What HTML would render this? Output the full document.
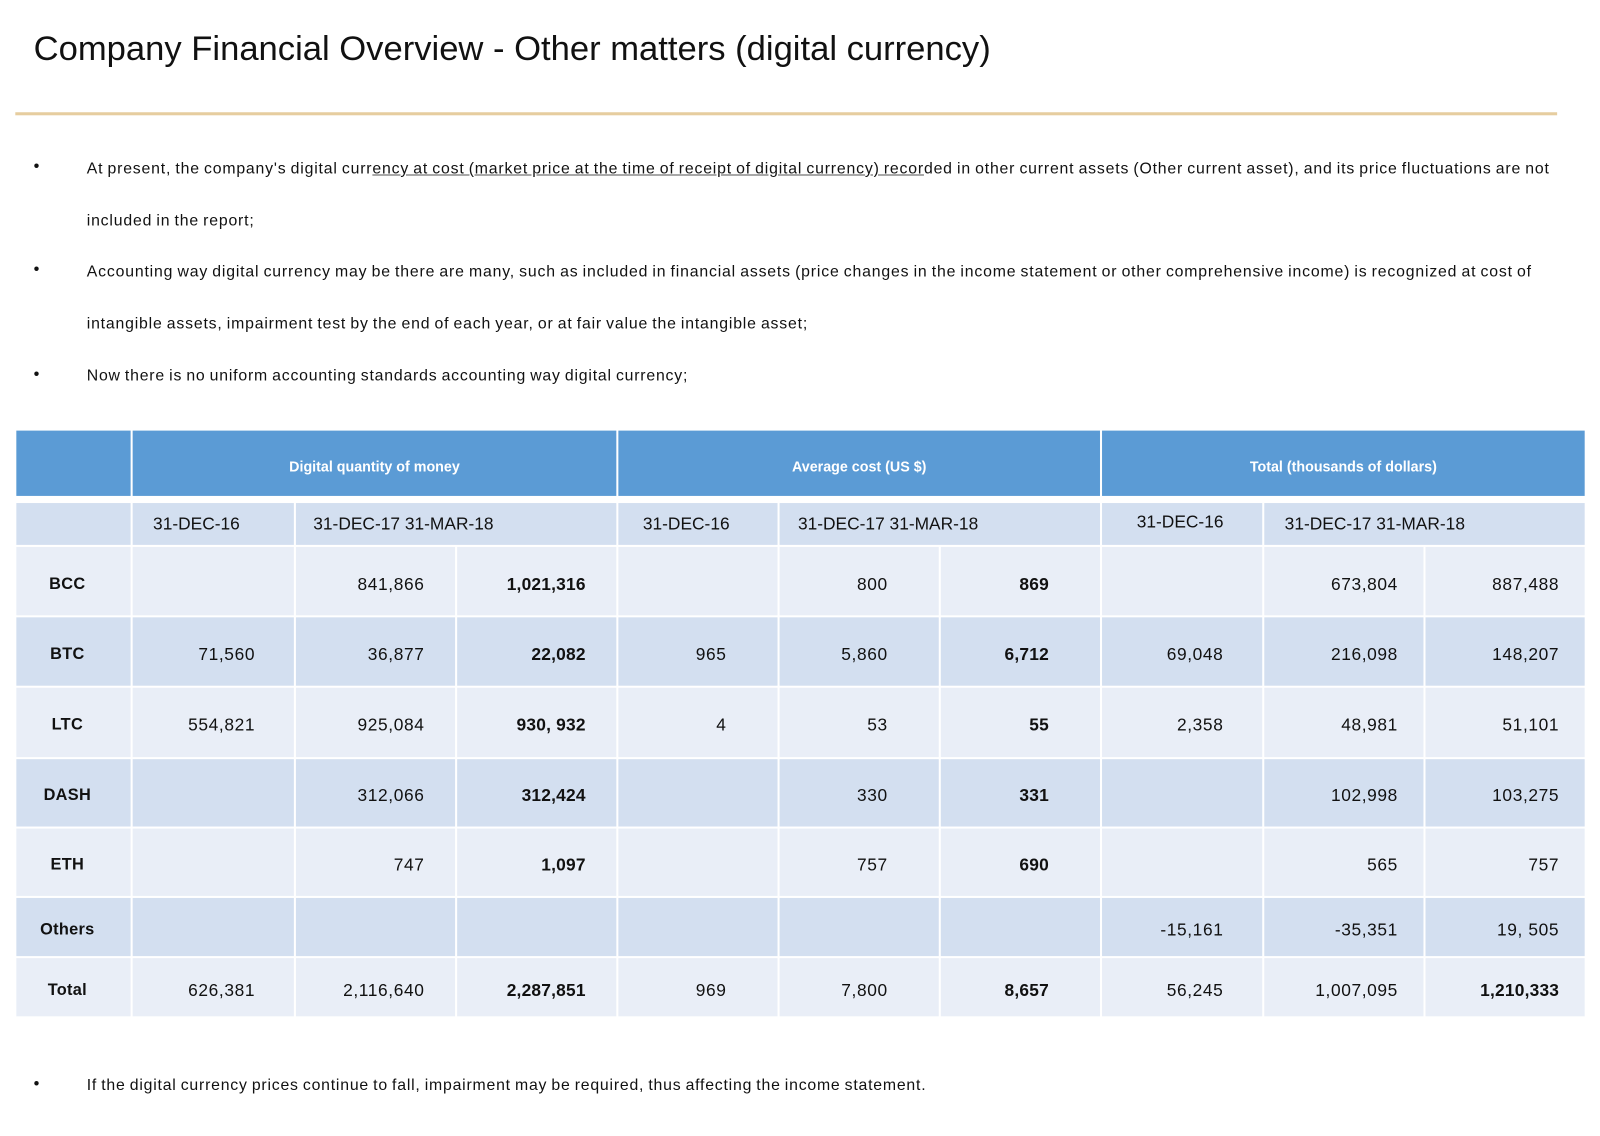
<!DOCTYPE html>
<html><head><meta charset="utf-8"><style>
body{margin:0;width:1600px;height:1136px;background:#fff;font-family:"Liberation Sans",Arial,sans-serif;position:relative;overflow:hidden;color:#111}
#w{position:absolute;left:0;top:0;width:1568px;height:1113px;transform:scale(1.0204);transform-origin:0 0}
.t{position:absolute;left:33px;top:29px;font-size:33.9px;white-space:nowrap}
.hr{position:absolute;left:15px;top:110px;width:1511px;height:3px;background:#e6cd9f}
.p{position:absolute;left:85px;font-size:15.5px;white-space:nowrap;letter-spacing:0.8px;word-spacing:-1px}
.b{position:absolute;left:33px;font-size:16px}
.c{position:absolute;box-sizing:border-box;display:flex;align-items:center;font-size:17px;white-space:nowrap;letter-spacing:0.6px}
.h{background:#5b9bd5;color:#fff;font-size:14px;font-weight:bold;justify-content:center;letter-spacing:0;padding-top:6px}
.u{text-decoration:underline;text-decoration-color:#555}
</style></head><body><div id="w">
<div class="t">Company Financial Overview - Other matters (digital currency)</div>
<div class="hr"></div>
<div class="b" style="top:155px">•</div>
<div class="p" style="top:157px">At present, the company's digital curr<span class="u">ency at cost (market price at the time of receipt of digital currency) recor</span>ded in other current assets (Other current asset), and its price fluctuations are not</div>
<div class="p" style="top:208px">included in the report;</div>
<div class="b" style="top:256px">•</div>
<div class="p" style="top:258px;letter-spacing:0.81px">Accounting way digital currency may be there are many, such as included in financial assets (price changes in the income statement or other comprehensive income) is recognized at cost of</div>
<div class="p" style="top:309px;letter-spacing:0.8px">intangible assets, impairment test by the end of each year, or at fair value the intangible asset;</div>
<div class="b" style="top:359px">•</div>
<div class="p" style="top:360px;letter-spacing:0.78px">Now there is no uniform accounting standards accounting way digital currency;</div>
<div class="b" style="top:1054px">•</div>
<div class="p" style="top:1055px;letter-spacing:0.77px">If the digital currency prices continue to fall, impairment may be required, thus affecting the income statement.</div>
<div id="tbl"></div>
</div>
<script>
var xs=[[16,128],[130,288],[290,446],[448,604],[606,762],[764,920],[922,1078],[1080,1237],[1239,1395],[1397,1553]];
var out='';
function cell(x,y,w,h,bg,txt,style){out+='<div class="c" style="left:'+x+'px;top:'+y+'px;width:'+w+'px;height:'+h+'px;background:'+bg+';'+(style||'')+'">'+txt+'</div>';}
out+='<div class="c h" style="left:16px;top:422px;width:112px;height:64px"></div>';
out+='<div class="c h" style="left:130px;top:422px;width:474px;height:64px">Digital quantity of money</div>';
out+='<div class="c h" style="left:606px;top:422px;width:472px;height:64px">Average cost (US $)</div>';
out+='<div class="c h" style="left:1080px;top:422px;width:473px;height:64px">Total (thousands of dollars)</div>';
var dr='#d3dff0';
cell(16,493,112,41,dr,'');
cell(130,493,158,41,dr,'31-DEC-16','padding-left:20px;letter-spacing:0');
cell(290,493,314,41,dr,'31-DEC-17 31-MAR-18','padding-left:17px;letter-spacing:0');
cell(606,493,156,41,dr,'31-DEC-16','padding-left:24px;letter-spacing:0');
cell(764,493,314,41,dr,'31-DEC-17 31-MAR-18','padding-left:18px;letter-spacing:0');
cell(1080,493,157,41,dr,'31-DEC-16','padding-left:34px;align-items:flex-start;padding-top:9px;letter-spacing:0');
cell(1239,493,314,41,dr,'31-DEC-17 31-MAR-18','padding-left:20px;letter-spacing:0');
var rows=[
[536,67,'BCC',['','841,866','1,021,316','','800','869','','673,804','887,488']],
[605,67,'BTC',['71,560','36,877','22,082','965','5,860','6,712','69,048','216,098','148,207']],
[674,68,'LTC',['554,821','925,084','930, 932','4','53','55','2,358','48,981','51,101']],
[744,66,'DASH',['','312,066','312,424','','330','331','','102,998','103,275']],
[812,66,'ETH',['','747','1,097','','757','690','','565','757']],
[880,57,'Others',['','','','','','','-15,161','-35,351','19, 505']],
[939,57,'Total',['626,381','2,116,640','2,287,851','969','7,800','8,657','56,245','1,007,095','1,210,333']]];
var pads=[38,30,30,50,50,50,38,25,25];
rows.forEach(function(r,i){
 var bg=i%2==0?'#e9eef7':'#d3dff0';
 cell(16,r[0],112,r[1],bg,r[2],'font-weight:bold;justify-content:center;font-size:16px;letter-spacing:0.3px;padding-top:6px;padding-right:12px');
 r[3].forEach(function(v,j){
  var bold=(j==2||j==5||(j==8&&i==6));
  cell(xs[j+1][0],r[0],xs[j+1][1]-xs[j+1][0],r[1],bg,v,'padding-top:6px;justify-content:flex-end;padding-right:'+pads[j]+'px;'+(bold?'font-weight:bold;letter-spacing:0.2px;':''));
 });
});
document.getElementById('tbl').innerHTML=out;
</script>
</body></html>
